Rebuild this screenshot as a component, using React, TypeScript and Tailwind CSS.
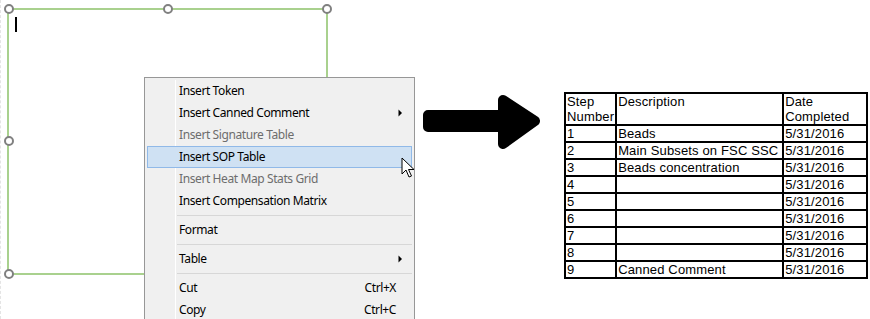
import React from "react";

type Item =
  | { kind: "item"; label: string; disabled?: boolean; active?: boolean; sub?: boolean; shortcut?: string }
  | { kind: "sep" };

const items: Item[] = [
  { kind: "item", label: "Insert Token" },
  { kind: "item", label: "Insert Canned Comment", sub: true },
  { kind: "item", label: "Insert Signature Table", disabled: true },
  { kind: "item", label: "Insert SOP Table", active: true },
  { kind: "item", label: "Insert Heat Map Stats Grid", disabled: true },
  { kind: "item", label: "Insert Compensation Matrix" },
  { kind: "sep" },
  { kind: "item", label: "Format" },
  { kind: "sep" },
  { kind: "item", label: "Table", sub: true },
  { kind: "sep" },
  { kind: "item", label: "Cut", shortcut: "Ctrl+X" },
  { kind: "item", label: "Copy", shortcut: "Ctrl+C" },
];

const rows: [string, string][] = [
  ["1", "Beads"],
  ["2", "Main Subsets on FSC SSC"],
  ["3", "Beads concentration"],
  ["4", ""],
  ["5", ""],
  ["6", ""],
  ["7", ""],
  ["8", ""],
  ["9", "Canned Comment"],
];

function Handle({ x, y }: { x: number; y: number }) {
  return (
    <div
      className="absolute w-[10px] h-[10px] rounded-full border-2 border-[#808080] bg-white"
      style={{ left: x - 5, top: y - 5 }}
    />
  );
}

function SubArrow() {
  return (
    <svg width="5" height="8" viewBox="0 0 5 8" className="ml-auto mr-[9px]">
      <path d="M0.5 0.5 L4 4 L0.5 7.5 Z" fill="#000" />
    </svg>
  );
}

export default function App() {
  return (
    <div className="w-[870px] h-[319px] bg-white flex overflow-hidden">
      {/* editor canvas */}
      <div className="relative w-[422px] h-full shrink-0 border-l border-dashed border-[#e4e4e4]">
        <div className="absolute left-[6px] top-[8px] w-[321px] h-[267px] border-2 border-[#a9d18e]" />
        <div className="absolute left-[14px] top-[17px] w-[2px] h-[15px] bg-black" />
        <Handle x={8} y={9} />
        <Handle x={167} y={9} />
        <Handle x={326} y={9} />
        <Handle x={8} y={141} />
        <Handle x={8} y={274} />

        {/* context menu */}
        <div
          className="absolute left-[143px] top-[77px] w-[271px] h-[260px] bg-[#f0f0f0] border border-[#979797] p-[2px] text-[12px] tracking-[-0.4px] text-black"
          style={{ fontFamily: '"Noto Sans", "Open Sans", sans-serif' }}
        >
          <div className="relative flex flex-col">
            <div className="absolute left-[28px] top-0 bottom-[-40px] w-[1px] bg-[#e2e2e2] border-r border-white" />
            {items.map((it, i) =>
              it.kind === "sep" ? (
                <div key={i} className="h-[7px] flex items-center pl-[30px]">
                  <div className="w-full h-[1px] bg-[#d7d7d7]" />
                </div>
              ) : (
                <div
                  key={i}
                  className={
                    "relative h-[22px] flex items-center " +
                    (it.active ? "bg-[#cfe1f3] border border-[#90b9e8] pl-[31px]" : "pl-[32px]") +
                    (it.disabled ? " text-[#6d6d6d]" : "")
                  }
                >
                  <span className="leading-none pb-[1px]">{it.label}</span>
                  {it.sub && <SubArrow />}
                  {it.shortcut && <span className="ml-auto mr-[16px] leading-none">{it.shortcut}</span>}
                </div>
              )
            )}
          </div>
        </div>

        {/* mouse pointer */}
        <svg className="absolute left-[400px] top-[157px]" width="14" height="22" viewBox="0 0 14 22">
          <path
            d="M1 1 L1 17 L5 13 L8 20 L10.5 19 L7.5 12.5 L13 12.5 Z"
            fill="#fff"
            stroke="#000"
            strokeWidth="1"
            strokeLinejoin="miter"
          />
        </svg>
      </div>

      {/* big arrow */}
      <div className="shrink-0 w-[142px] pt-[94px]">
        <svg width="118" height="58" viewBox="0 0 118 58">
          <path
            d="M6 21 L81 21 L81 6 L113 27 L81 50 L81 33 L6 33 Z"
            fill="#000"
            stroke="#000"
            strokeWidth="10"
            strokeLinejoin="round"
          />
        </svg>
      </div>

      {/* SOP table */}
      <div className="pt-[92px]">
        <table
          className="border-collapse border-2 border-black text-[13px] leading-[15px] tracking-[0.15px] text-black"
          style={{ fontFamily: '"Liberation Sans", Arial, sans-serif' }}
        >
          <colgroup>
            <col className="w-[51px]" />
            <col className="w-[167px]" />
            <col className="w-[84px]" />
          </colgroup>
          <tbody>
            <tr>
              <td className="border-2 border-black align-top px-[1px] h-[31px]">Step<br />Number</td>
              <td className="border-2 border-black align-top px-[1px]">Description</td>
              <td className="border-2 border-black align-top px-[1px]">Date<br />Completed</td>
            </tr>
            {rows.map(([n, d]) => (
              <tr key={n}>
                <td className="border-2 border-black px-[1px] h-[17px] p-0">{n}</td>
                <td className="border-2 border-black px-[1px] p-0">{d}</td>
                <td className="border-2 border-black px-[1px] p-0">5/31/2016</td>
              </tr>
            ))}
          </tbody>
        </table>
      </div>
    </div>
  );
}
